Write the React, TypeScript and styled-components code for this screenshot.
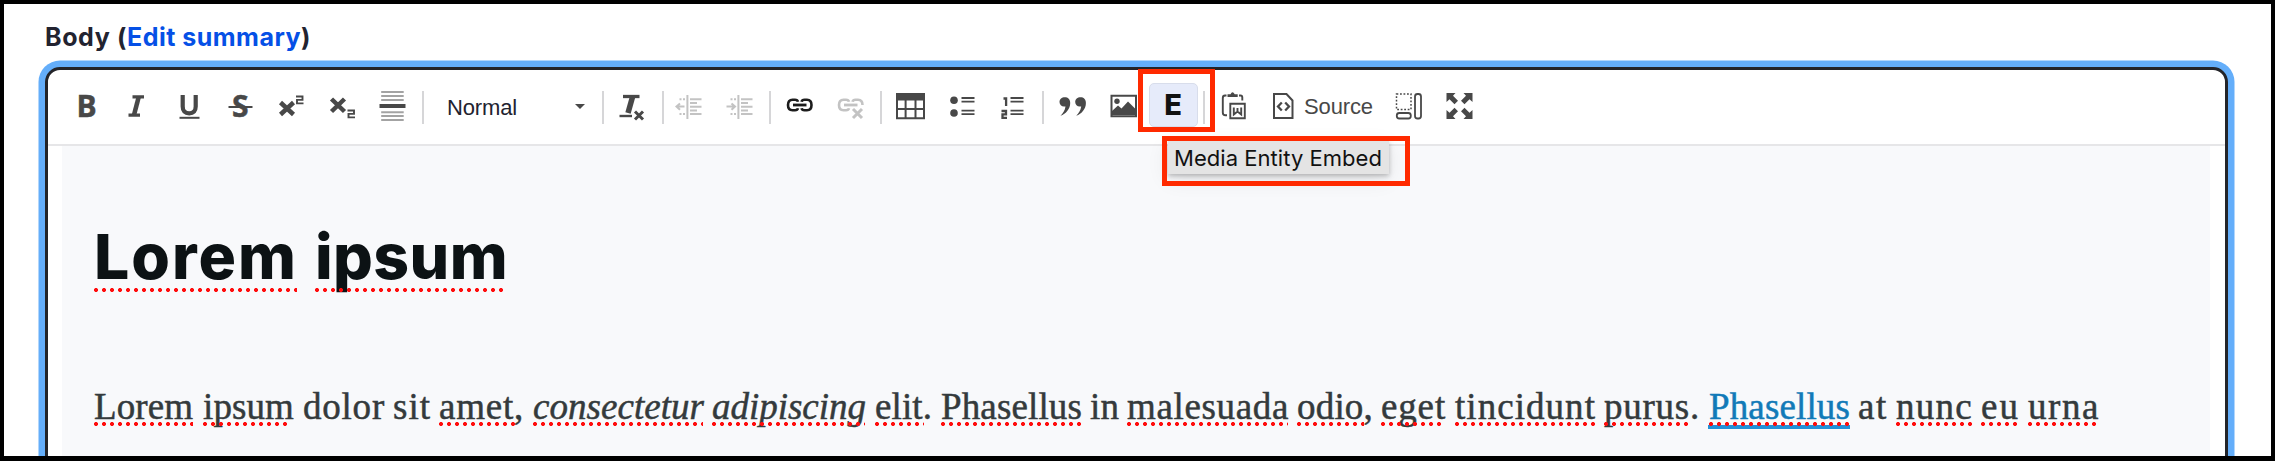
import React, { useLayoutEffect, useRef, useState } from "react";
import styled, { createGlobalStyle, css } from "styled-components";

const GlobalStyle = createGlobalStyle`
  * { box-sizing: border-box; }
  body { margin: 0; background: #000; }
`;

const Page = styled.main`
  height: 461px;
  border: 4px solid #000;
  border-bottom-width: 5px;
  background: #fff;
  overflow: hidden;
  position: relative;
  font-family: Inter, "Liberation Sans", sans-serif;
`;

const FieldLabel = styled.div`
  height: 63px;
  padding: 15px 0 0 41px;
  font-size: 25px;
  line-height: 36px;
  font-weight: 700;
  color: #222330;
  white-space: nowrap;
`;

const EditSummary = styled.a`
  color: #0550e6;
`;

const Editor = styled.section`
  margin: 0 43px 0 41px;
  height: 420px;
  border: 3px solid #232429;
  border-radius: 15px 15px 0 0;
  box-shadow: 0 0 0 6.5px #64aefa;
  background: #fff;
`;

const Toolbar = styled.div`
  display: flex;
  align-items: center;
  height: 76px;
  padding: 0 0 0 15px;
  border-bottom: 2px solid #e6e6e8;
`;

const ToolButton = styled.button`
  flex: none;
  display: flex;
  align-items: center;
  justify-content: center;
  width: 51px;
  height: 46px;
  padding: 0 1px 0 0;
  border: 0;
  background: none;
  color: #484848;
`;

const Glyph = styled.svg<{ $faded?: boolean }>`
  display: block;
  flex: none;
  width: 32px;
  height: 32px;
  overflow: visible;
  opacity: ${(p) => (p.$faded ? 0.32 : 1)};
`;

const Separator = styled.span<{ $before: number; $after: number }>`
  flex: none;
  width: 2px;
  height: 33px;
  margin: 0 ${(p) => p.$after}px 0 ${(p) => p.$before}px;
  background: #d6d6d8;
`;

const FormatSelect = styled.div`
  flex: none;
  display: flex;
  align-items: center;
  justify-content: space-between;
  width: 178px;
  height: 46px;
  padding: 2px 17px 0 23px;
  font: 22px "Liberation Sans", Arial, sans-serif;
  color: #222330;
`;

const Caret = styled.i`
  border: 5px solid transparent;
  border-top-color: #484848;
  border-bottom: 0;
  margin-top: -3px;
`;

const SourceButton = styled(ToolButton)`
  width: 124px;
  justify-content: flex-start;
  padding-left: 7px;
  gap: 5px;
  font: 22px "Liberation Sans", Arial, sans-serif;
`;

const EmbedButton = styled(ToolButton)`
  width: 49px;
  height: 44px;
  margin: 0 2px 4px 0;
  border: 1px solid #d8ddeb;
  border-radius: 5px;
  background: #e6ebfa;
  color: #111;
  font: 800 29px/44px Inter, sans-serif;
`;

const Content = styled.div`
  margin: 0 15px 0 14px;
  height: 340px;
  padding: 65px 0 0 32px;
  background: #f8f9fb;
`;

const Heading = styled.h1`
  display: flex;
  margin: 0;
  height: 90px;
  font: 800 62.5px/90px Inter, sans-serif;
  color: #0c1214;
`;

const Paragraph = styled.p`
  display: flex;
  margin: 81px 0 0;
  height: 50px;
  font: 37px/50px "Liberation Serif", "Times New Roman", serif;
  color: #343a3c;
  -webkit-text-stroke: 0.5px currentColor;
`;

const WordBox = styled.span<{ $width: number; $gap: number; $dots?: number; $dotsY: number; $italic?: boolean; $link?: boolean }>`
  flex: none;
  position: relative;
  width: ${(p) => p.$width}px;
  margin-right: ${(p) => p.$gap}px;
  white-space: nowrap;
  font-style: ${(p) => (p.$italic ? "italic" : "normal")};
  ${(p) => p.$link && css`
    color: #117ab8;
    &::before {
      content: "";
      position: absolute;
      left: -1px;
      right: 0;
      top: 43px;
      height: 4px;
      background: #2490d8;
    }
  `}
  ${(p) => p.$dots && css`
    &::after {
      content: "";
      position: absolute;
      left: 0;
      width: ${p.$dots}px;
      top: ${p.$dotsY}px;
      height: 4px;
      background: radial-gradient(circle at 2px 2px, #ff0d0d 1.7px, transparent 2.3px) 0 0 / 8px 4px repeat-x;
    }
  `}
`;

const Highlight = styled.div<{ $x: number; $y: number; $w: number; $h: number }>`
  position: absolute;
  left: ${(p) => p.$x}px;
  top: ${(p) => p.$y}px;
  width: ${(p) => p.$w}px;
  height: ${(p) => p.$h}px;
  border: 5px solid #ff2a00;
`;

const Tooltip = styled.div`
  position: absolute;
  left: 1164px;
  top: 137px;
  width: 221px;
  height: 33px;
  padding-left: 6px;
  background: #e4e4e4;
  box-shadow: 0 2px 5px rgba(0, 0, 0, 0.25), 0 5px 22px rgba(0, 0, 0, 0.09);
  color: #111;
  font-size: 22px;
  line-height: 35px;
  white-space: nowrap;
`;

/* Spreads its letters so that the text takes exactly the given width. */
function Fit({ width, children }: { width: number; children: string }) {
  const ref = useRef<HTMLSpanElement>(null);
  const [spacing, setSpacing] = useState(0);
  useLayoutEffect(() => {
    const natural = ref.current!.getBoundingClientRect().width - spacing * children.length;
    setSpacing((width - natural) / children.length);
  }, [width, children]);
  return <span ref={ref} style={{ letterSpacing: spacing }}>{children}</span>;
}

type Word = { text: string; x: number; end: number; dots?: number; italic?: boolean; link?: boolean };

const headingWords: Word[] = [
  { text: "Lorem", x: 94, end: 298, dots: 203 },
  { text: "ipsum", x: 315, end: 508, dots: 192 },
];

const paragraphWords: Word[] = [
  { text: "Lorem", x: 94, end: 193, dots: 99 },
  { text: "ipsum", x: 203, end: 294, dots: 88 },
  { text: "dolor", x: 303, end: 385 },
  { text: "sit", x: 393, end: 431 },
  { text: "amet,", x: 439, end: 524, dots: 76 },
  { text: "consectetur", x: 533, end: 704, dots: 170, italic: true },
  { text: "adipiscing", x: 712, end: 866, dots: 153, italic: true },
  { text: "elit.", x: 875, end: 932, dots: 49 },
  { text: "Phasellus", x: 941, end: 1082, dots: 141 },
  { text: "in", x: 1090, end: 1119 },
  { text: "malesuada", x: 1127, end: 1289, dots: 161 },
  { text: "odio,", x: 1297, end: 1373, dots: 67 },
  { text: "eget", x: 1381, end: 1446, dots: 64 },
  { text: "tincidunt", x: 1455, end: 1596, dots: 141 },
  { text: "purus.", x: 1604, end: 1700, dots: 87 },
  { text: "Phasellus", x: 1709, end: 1850, dots: 141, link: true },
  { text: "at", x: 1858, end: 1888 },
  { text: "nunc", x: 1896, end: 1973, dots: 76 },
  { text: "eu", x: 1981, end: 2020, dots: 37 },
  { text: "urna", x: 2028, end: 2100, dots: 71 },
];

function Words({ words, dotsY }: { words: Word[]; dotsY: number }) {
  return (
    <>
      {words.map((w, i) => (
        <WordBox
          key={i}
          $width={w.end - w.x}
          $gap={i + 1 < words.length ? words[i + 1].x - w.end : 0}
          $dots={w.dots}
          $dotsY={dotsY}
          $italic={w.italic}
          $link={w.link}
        >
          <Fit width={w.end - w.x}>{w.text}</Fit>
        </WordBox>
      ))}
    </>
  );
}

function Tool({ label, faded, children }: { label: string; faded?: boolean; children: React.ReactNode }) {
  return (
    <ToolButton aria-label={label}>
      <Glyph viewBox="0 0 32 32" fill="none" stroke="currentColor" strokeWidth="2" $faded={faded}>{children}</Glyph>
    </ToolButton>
  );
}

const letter = { fill: "currentColor", stroke: "currentColor", strokeWidth: 0.5, fontWeight: 700, fontSize: 30, fontFamily: "Open Sans" } as const;
const indentLines = <path d="M14.4 4v24M17 8.3h11.5M17 12h7M17 15.8h11.5M17 19.5h7M17 23h11.5M6.5 8.3h2M10 8.3h2M6.5 23h2M10 23h2" />;
const chain = (
  <>
    <path d="M15 10.800Q14.500 8.800 12 8.800H9.500Q5 8.800 5 14t4.500 5.200H12q2.500 0 3-2M18.500 10.800Q19 8.800 21.500 8.800H24q4.500 0 4.500 5.200" strokeWidth="2.600" />
    <path d="M10 14h13.500" strokeWidth="2.800" />
  </>
);
const quoteMark = "M8.800 6.300c-3 0-5.300 2-5.300 4.800 0 2.600 2 4.500 4.500 4.500l1.500-.2c-.5 3.700-2.400 6.700-5 9.300 5.600-2 9.700-7 9.700-12.800 0-3.600-2.200-5.600-5.400-5.600z";

export default function App() {
  return (
    <>
      <GlobalStyle />
      <Page>
        <FieldLabel>
          <Fit width={82}>{"Body ("}</Fit>
          <EditSummary><Fit width={174}>Edit summary</Fit></EditSummary>)
        </FieldLabel>
        <Editor>
          <Toolbar>
            <Tool label="Bold"><text x="4.500" y="26" {...letter}>B</text></Tool>
            <Tool label="Italic"><path d="M9.500 5.900H21M5.500 24.200H17" strokeWidth="3.300" /><path d="M15.700 6L11 24" strokeWidth="4.600" /></Tool>
            <Tool label="Underline"><path d="M8.700 4v11.500q0 6.800 6.500 6.800t6.500-6.800V4" strokeWidth="4.200" /><path d="M5.500 26.800h20" /></Tool>
            <Tool label="Strike"><text x="7" y="26" {...letter}>S</text><path d="M3.500 16h24" /></Tool>
            <Tool label="Superscript"><path d="M4.500 11.500L17.500 23.500M17.500 11.500L4.500 23.500" strokeWidth="4.500" /><path d="M20 5.500h6.500v3.400H21v3.500h6.500" strokeWidth="1.900" /></Tool>
            <Tool label="Subscript"><path d="M4.500 8L17.500 20.500M17.500 8L4.500 20.500" strokeWidth="4.500" /><path d="M20.500 19.500H27v3.400h-5.500v3.500h6.500" strokeWidth="1.900" /></Tool>
            <Tool label="Horizontal line"><path d="M3.200 1h22.500M3.200 5h22.500M3.200 9h22.500M3.200 21.300h22.500M3.200 25h22.500M3.200 29h22.500" opacity=".5" /><path d="M1.500 15H27.500" strokeWidth="4" /></Tool>
            <Separator $before={2} $after={0} />
            <FormatSelect><Fit width={70}>Normal</Fit><Caret /></FormatSelect>
            <Separator $before={0} $after={2} />
            <Tool label="Remove format"><path d="M8 5.500H24.500" strokeWidth="3.300" /><path d="M17.500 6L13 22" strokeWidth="5.500" /><path d="M4.500 25H17" strokeWidth="2.400" /><path d="M20 20.500L28 28.500M28 20.500L20 28.500" strokeWidth="3" /></Tool>
            <Separator $before={5} $after={0} />
            <Tool label="Outdent" faded>{indentLines}<path d="M4 15.600h7.500M7 12.500L3.500 15.600L7 18.700" /></Tool>
            <Tool label="Indent" faded>{indentLines}<path d="M2.500 15.600H10M7.500 12.500L11 15.600L7.500 18.700" /></Tool>
            <Separator $before={3} $after={3} />
            <Tool label="Link"><g stroke="#1c1c1c">{chain}<path d="M28.500 14q0 5.200-4.500 5.200h-2.500q-2.500 0-3-2" strokeWidth="2.600" /></g></Tool>
            <Tool label="Unlink" faded>{chain}<path d="M19 18L28 27M28 18L19 27" strokeWidth="3" /></Tool>
            <Separator $before={4} $after={3} />
            <Tool label="Table"><path d="M2 2h29v7.500H2z" fill="currentColor" stroke="none" /><path d="M3 4v23.200h27V4M11.600 9v18M21.500 9v18M3 18h27" /></Tool>
            <Tool label="Bulleted list"><g fill="currentColor" stroke="none"><circle cx="9" cy="9.300" r="3.800" /><circle cx="9" cy="22" r="3.800" /></g><path d="M16.500 7h13M16.500 10.600h13M16.500 19.700h13M16.500 23.200h13" strokeWidth="1.800" /></Tool>
            <Tool label="Numbered list"><path d="M7.500 7.500h2.600v7.500M5.500 20h4.500v3.300H6.500v3.500h4.500" strokeWidth="2.300" /><path d="M14.500 7h13M14.500 10.600h13M14.500 19.700h13M14.500 23.200h13" strokeWidth="1.800" /></Tool>
            <Separator $before={4} $after={3} />
            <Tool label="Block quote"><g fill="currentColor" stroke="none"><path d={quoteMark} /><path transform="translate(15.700 0)" d={quoteMark} /></g></Tool>
            <Tool label="Image"><path d="M4.500 4.700h24.500v20.500H4.500z" /><path d="M5 24v-4l6-5.500 3.500 3 6.500-7 8 8V24z" fill="currentColor" stroke="none" /><circle cx="10" cy="10.300" r="2.700" fill="currentColor" stroke="none" /></Tool>
            <EmbedButton aria-label="Media Entity Embed">E</EmbedButton>
            <Separator $before={3} $after={4} />
            <Tool label="Paste from Word"><path d="M8.500 4.500H7Q4.800 4.500 4.800 7v14.500q0 2.800 2.700 2.800H9M21 4.500h1.500q1.800 0 1.800 2v3" strokeWidth="1.900" /><path d="M9.500 6V3.200h3Q14.500-.5 16.700 3.200h3V6z" fill="currentColor" stroke="none" /><path d="M12.300 12.800h14.500v14.500H12.300zM15.800 16.500v7l3.700-3 3.700 3v-7M19.500 17v4" strokeWidth="1.900" /></Tool>
            <SourceButton>
              <Glyph viewBox="0 0 32 32" fill="none" stroke="currentColor" strokeWidth="2"><path d="M7 3h12.500l6 6.500V27H7z" /><path d="M14.800 11.500L11 15.500l3.800 4M18.200 11.500l3.800 4-3.800 4" strokeWidth="2.300" /></Glyph>
              <Fit width={69}>Source</Fit>
            </SourceButton>
            <Tool label="Show blocks"><path d="M3.500 3h14.500v15.500H3.500z" strokeDasharray="1.800 1.700" strokeWidth="1.500" /><rect x="22" y="3" width="6" height="24.500" rx="2.500" strokeWidth="1.800" /><rect x="3.800" y="22" width="14" height="5.500" rx="2.500" strokeWidth="1.800" /></Tool>
            <Tool label="Maximize"><g fill="currentColor" stroke="none"><path d="M2.500 2h9L9 4.800l5 5-3.500 3.500-5-5L2.500 11z" /><path d="M28.500 2v9l-3-2.700-5 5L17 9.800l5-5L19.500 2z" /><path d="M2.500 28v-9l3 2.700 5-5L14 20.200l-5 5 2.500 2.800z" /><path d="M28.500 28h-9l2.500-2.800-5-5 3.500-3.500 5 5 3-2.700z" /></g></Tool>
          </Toolbar>
          <Content>
            <Heading><Words words={headingWords} dotsY={76.5} /></Heading>
            <Paragraph><Words words={paragraphWords} dotsY={39.5} /></Paragraph>
          </Content>
        </Editor>
        <Tooltip role="tooltip"><Fit width={208}>Media Entity Embed</Fit></Tooltip>
        <Highlight $x={1134} $y={65} $w={77} $h={63} />
        <Highlight $x={1158} $y={132} $w={248} $h={50} />
      </Page>
    </>
  );
}
